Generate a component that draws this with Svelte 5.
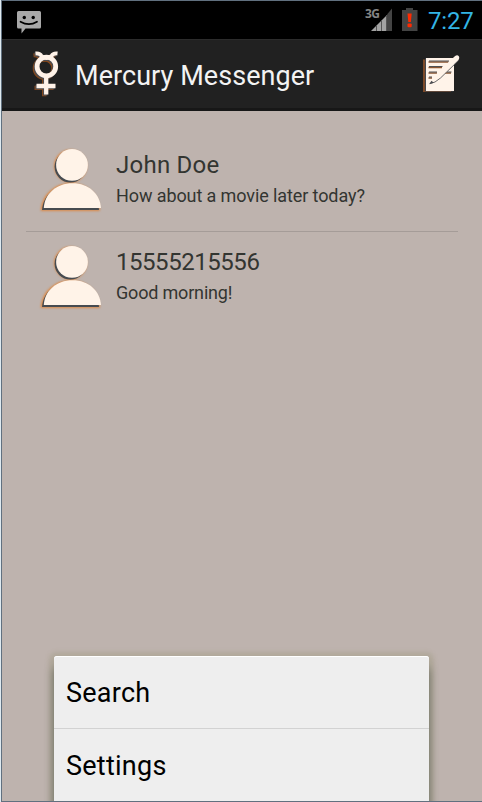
<script>
  const threads = [
    { name: 'John Doe', preview: 'How about a movie later today?', cls: 'john' },
    { name: '15555215556', preview: 'Good morning!', cls: 'number' }
  ];
  const menu = ['Search', 'Settings'];
</script>

<div class="frame">
  <div class="phone">
    <div class="status">
      <svg class="sms" width="24" height="24" viewBox="0 0 24 24">
        <path d="M1.500 1H22.500Q24 1 24 2.500V17Q24 18.500 22.500 18.500H8.500L4.500 23.500V18.500H1.500Q0 18.500 0 17V2.500Q0 1 1.500 1Z" fill="#a9a9a9" />
        <circle cx="7.300" cy="7.500" r="1.700" /><circle cx="16.200" cy="7.500" r="1.700" />
        <path d="M3.500 11.700Q12 16.500 20 11.700" fill="none" stroke="#000" stroke-width="1.700" stroke-linecap="round" />
      </svg>
      <div class="signal">
        <span>3G</span>
        <svg width="22" height="24" viewBox="0 0 22 24">
          <path d="M0 24L16 8V24Z" fill="#a3a3a3" />
          <path d="M16 7.500L21 1.500V24H16Z" fill="#444" />
          <path d="M5.500 18V24M10.500 13V24M15.500 8V24" stroke="#555" />
        </svg>
      </div>
      <svg class="battery" width="16" height="24" viewBox="0 0 16 24">
        <path d="M0 3H4V1H11V3H15.500V24H0Z" fill="#444" />
        <path d="M5.500 6.500H9.700L8.900 15H6.300Z" fill="#ff2a00" />
        <rect x="5.500" y="16.500" width="4.200" height="3.800" rx="1" fill="#ff2a00" />
      </svg>
      <span class="clock">7:27</span>
    </div>

    <header>
      <svg class="logo" width="40" height="56" viewBox="0 0 40 56">
        <defs>
          <g id="mercury" fill="none">
            <path d="M9.500 7.500Q14 7 15.500 10Q20.500 14 25.500 10Q27 7 31.500 7.500" stroke-width="3.800" />
            <circle cx="20.400" cy="20.500" r="9.300" stroke-width="4.800" />
            <path d="M20.200 30V48.500M10.500 40H29.500" stroke-width="4.300" />
          </g>
        </defs>
        <use href="#mercury" x="-2" y="1.800" stroke="#87491c" />
        <use href="#mercury" x="-1" y="1" stroke="#4d4c50" />
        <use href="#mercury" stroke="#fff2e8" />
      </svg>
      <h1>Mercury Messenger</h1>
      <svg class="compose" width="50" height="50" viewBox="0 0 50 50">
        <path d="M7 9.500H35V42H7Z" fill="#7d4a29" />
        <path d="M9 8.500H37.500V41.500H9Z" fill="#45474c" />
        <path d="M10 8H38V41H10Z" fill="#fff3e9" />
        <path d="M12.500 12H32.500M12.500 17.500H26M12.500 23H21M29 23H35M12.500 28H16" fill="none" stroke="#8b5733" stroke-width="1.500" />
        <path d="M13 11H33M13 16.500H26.500M13 22H21M31 22H35.500M13 27H16" stroke="#4e5155" />
        <path d="M14 33.500L17 27.500L22 22.500L38 7Q41 4 43 6.500Q44 9 41 11.500L24 28.500L19 32.500Z" fill="#fff3e9" />
        <path d="M14 33.700L19 32L24.500 28L42.500 10.500" fill="none" stroke="#5b5b5e" stroke-width=".9" />
        <path d="M13 34.300L15.500 30.800L17.800 32.800Z" fill="#4a4b50" />
      </svg>
    </header>

    <main>
      {#each threads as t}
        <article class={t.cls}>
          <svg class="avatar" width="70" height="70" viewBox="0 0 70 70">
            <g class="glow">
              <circle cx="34.500" cy="22" r="15.500" />
              <path d="M5.500 66C7 50 20 40 35 40S62 50 63 66Z" />
            </g>
            <g fill="#474b50">
              <circle cx="34.300" cy="22.800" r="15.700" />
              <path d="M6 66C7 51 20 40.500 35 40.500S62 51 63 66Z" />
            </g>
            <g fill="#fff3e8">
              <circle cx="36" cy="20.900" r="15.900" />
              <path d="M7.800 64C8.500 50 20 39.200 36.500 39.200S64 50 65 64Z" />
            </g>
          </svg>
          <div class="copy">
            <h2>{t.name}</h2>
            <p>{t.preview}</p>
          </div>
        </article>
      {/each}
    </main>

    <nav>
      {#each menu as item}
        <button class={item.toLowerCase()}>{item}</button>
      {/each}
    </nav>
  </div>
</div>

<style>
  .frame {
    box-sizing: border-box;
    width: 481px;
    height: 802px;
    border: solid #61707f;
    border-width: 1px 0 1px 1px;
    overflow: hidden;
    font-family: Roboto, sans-serif;
  }
  :global(#app) { background: #dfeaf0; padding-left: 1px; width: 481px; overflow: hidden; }
  .phone {
    position: relative;
    height: 800px;
    width: 480px;
    display: flex;
    flex-direction: column;
    background: #beb3ae;
  }
  .status {
    height: 38px;
    background: #000;
    display: flex;
    align-items: flex-start;
  }
  .sms { margin: 9px 0 0 15px; }
  .signal { width: 28px; margin: 6px 0 0 324px; display: flex; align-items: flex-start; }
  .signal span { width: 14px; margin-right: -8px; font: bold 12px/14px 'Noto Sans', sans-serif; letter-spacing: -0.500px; color: #858585; white-space: nowrap; flex: none; }
  .signal svg { flex: none; }
  .battery { margin: 6px 0 0 9px; }
  .clock { margin-left: 10px; font-size: 24px; line-height: 40px; letter-spacing: -0.200px; color: #33b5e5; white-space: nowrap; }
  header {
    box-sizing: border-box;
    height: 72px;
    background: #212121;
    border-top: 1px solid #2c2c2c;
    border-bottom: 3px solid #171717;
    display: flex;
    align-items: flex-start;
  }
  .logo { margin: 6px 0 0 24px; }
  h1 { margin: 0 0 0 9px; width: 341px; font-size: 27px; line-height: 72px; letter-spacing: 0.060px; font-weight: 400; color: #f3f3f3; white-space: nowrap; }
  .compose { margin-top: 10px; flex: none; }
  main { flex: 1; padding: 24px 24px 0; }
  article { box-sizing: border-box; height: 97px; display: flex; padding: 9px 0 0 10px; }
  article:first-child { border-bottom: 1px solid #a59c98; }
  .avatar { flex: none; }
  .glow { fill: #e08439; stroke: #e08439; stroke-width: 1.500px; filter: blur(1.300px); }
  .copy { padding-left: 10px; color: #333531; white-space: nowrap; }
  h2 { margin: 5px 0 0; font-weight: 400; font-size: 24px; line-height: 32px; letter-spacing: 0.250px; }
  .number h2 { letter-spacing: -0.450px; }
  p { margin: 3px 0 0; font-size: 18px; line-height: 24px; letter-spacing: -0.100px; }
  .number p { letter-spacing: -0.180px; }
  nav {
    position: absolute;
    left: 52px;
    top: 655px;
    width: 375px;
    height: 145px;
    overflow: hidden;
    background: #eee;
    border-radius: 3px 3px 0 0;
    box-shadow: inset 0 1px #fff, 0 12px 10px 0 rgba(50, 60, 50, .6), 0 1px 4px 5px rgba(150, 145, 115, .32);
  }
  button {
    box-sizing: border-box;
    display: block;
    width: 100%;
    height: 73px;
    border: 0;
    background: none;
    padding: 2px 0 0 12px;
    text-align: left;
    font: 400 27px/71px Roboto, sans-serif;
    letter-spacing: 0.250px;
    color: #000;
  }
  .search { border-bottom: 1px solid #d2d2d2; }
</style>
